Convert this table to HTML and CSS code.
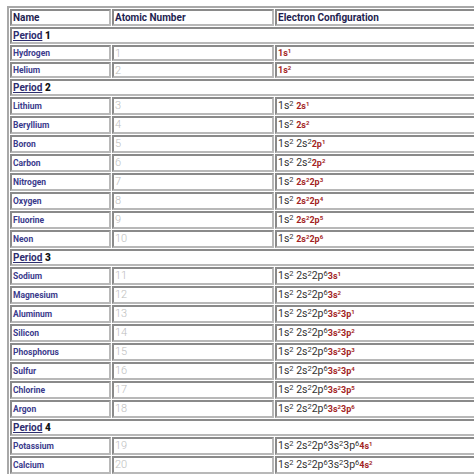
FILE: index.html
```html
<!DOCTYPE html>
<html lang="en">
<head>
<meta charset="utf-8">
<title>Electron Configuration</title>
<link rel="stylesheet" href="styles.css">
</head>
<body>
<table class="elements">
  <tr class="head">
    <th class="col-name">Name</th>
    <th class="col-num">Atomic Number</th>
    <th class="col-cfg">Electron Configuration</th>
  </tr>
  <tr class="period"><td colspan="3"><a href="#">Period</a> <b>1</b></td></tr>
  <tr class="small"><td class="name">Hydrogen</td><td class="num">1</td><td class="cfg"><span class="hl">1s<sup>1</sup></span></td></tr>
  <tr class="small"><td class="name">Helium</td><td class="num">2</td><td class="cfg"><span class="hl">1s<sup>2</sup></span></td></tr>
  <tr class="period"><td colspan="3"><a href="#">Period</a> <b>2</b></td></tr>
  <tr class="big"><td class="name">Lithium</td><td class="num">3</td><td class="cfg">1s<sup>2</sup> <span class="hl">2s<sup>1</sup></span></td></tr>
  <tr class="big"><td class="name">Beryllium</td><td class="num">4</td><td class="cfg">1s<sup>2</sup> <span class="hl">2s<sup>2</sup></span></td></tr>
  <tr class="big"><td class="name">Boron</td><td class="num">5</td><td class="cfg">1s<sup>2</sup> 2s<sup>2</sup><span class="hl">2p<sup>1</sup></span></td></tr>
  <tr class="big"><td class="name">Carbon</td><td class="num">6</td><td class="cfg">1s<sup>2</sup> 2s<sup>2</sup><span class="hl">2p<sup>2</sup></span></td></tr>
  <tr class="big"><td class="name">Nitrogen</td><td class="num">7</td><td class="cfg">1s<sup>2</sup> <span class="hl">2s<sup>2</sup>2p<sup>3</sup></span></td></tr>
  <tr class="big"><td class="name">Oxygen</td><td class="num">8</td><td class="cfg">1s<sup>2</sup> <span class="hl">2s<sup>2</sup>2p<sup>4</sup></span></td></tr>
  <tr class="big"><td class="name">Fluorine</td><td class="num">9</td><td class="cfg">1s<sup>2</sup> <span class="hl">2s<sup>2</sup>2p<sup>5</sup></span></td></tr>
  <tr class="big"><td class="name">Neon</td><td class="num">10</td><td class="cfg">1s<sup>2</sup> <span class="hl">2s<sup>2</sup>2p<sup>6</sup></span></td></tr>
  <tr class="period"><td colspan="3"><a href="#">Period</a> <b>3</b></td></tr>
  <tr class="big"><td class="name">Sodium</td><td class="num">11</td><td class="cfg">1s<sup>2</sup> 2s<sup>2</sup>2p<sup>6</sup><span class="hl">3s<sup>1</sup></span></td></tr>
  <tr class="big"><td class="name">Magnesium</td><td class="num">12</td><td class="cfg">1s<sup>2</sup> 2s<sup>2</sup>2p<sup>6</sup><span class="hl">3s<sup>2</sup></span></td></tr>
  <tr class="big"><td class="name">Aluminum</td><td class="num">13</td><td class="cfg">1s<sup>2</sup> 2s<sup>2</sup>2p<sup>6</sup><span class="hl">3s<sup>2</sup>3p<sup>1</sup></span></td></tr>
  <tr class="big"><td class="name">Silicon</td><td class="num">14</td><td class="cfg">1s<sup>2</sup> 2s<sup>2</sup>2p<sup>6</sup><span class="hl">3s<sup>2</sup>3p<sup>2</sup></span></td></tr>
  <tr class="big"><td class="name">Phosphorus</td><td class="num">15</td><td class="cfg">1s<sup>2</sup> 2s<sup>2</sup>2p<sup>6</sup><span class="hl">3s<sup>2</sup>3p<sup>3</sup></span></td></tr>
  <tr class="big"><td class="name">Sulfur</td><td class="num">16</td><td class="cfg">1s<sup>2</sup> 2s<sup>2</sup>2p<sup>6</sup><span class="hl">3s<sup>2</sup>3p<sup>4</sup></span></td></tr>
  <tr class="big"><td class="name">Chlorine</td><td class="num">17</td><td class="cfg">1s<sup>2</sup> 2s<sup>2</sup>2p<sup>6</sup><span class="hl">3s<sup>2</sup>3p<sup>5</sup></span></td></tr>
  <tr class="big"><td class="name">Argon</td><td class="num">18</td><td class="cfg">1s<sup>2</sup> 2s<sup>2</sup>2p<sup>6</sup><span class="hl">3s<sup>2</sup>3p<sup>6</sup></span></td></tr>
  <tr class="period"><td colspan="3"><a href="#">Period</a> <b>4</b></td></tr>
  <tr class="big"><td class="name">Potassium</td><td class="num">19</td><td class="cfg">1s<sup>2</sup> 2s<sup>2</sup>2p<sup>6</sup>3s<sup>2</sup>3p<sup>6</sup><span class="hl">4s<sup>1</sup></span></td></tr>
  <tr class="big"><td class="name">Calcium</td><td class="num">20</td><td class="cfg">1s<sup>2</sup> 2s<sup>2</sup>2p<sup>6</sup>3s<sup>2</sup>3p<sup>6</sup><span class="hl">4s<sup>2</sup></span></td></tr>
</table>
</body>
</html>
```
FILE: styles.css
```css
html, body {
  overflow: hidden;
}
body {
  margin: 6px 0 0 7px;
  background: #fff;
  font-family: Roboto, "Liberation Sans", sans-serif;
}
.elements {
  border-collapse: separate;
  border-spacing: 1px;
  border: 2px solid #a8a8a8;
  table-layout: fixed;
  width: 560px;
}
.elements th,
.elements td {
  border: 2px solid;
  border-color: #8a8a8a #b8b8b8 #b8b8b8 #8a8a8a;
  padding: 0 1px;
  text-align: left;
  vertical-align: middle;
  white-space: nowrap;
}
.col-name {
  width: 101px;
  box-sizing: border-box;
}
.col-num {
  width: 162px;
  box-sizing: border-box;
}
.head th {
  font-size: 10px;
  font-weight: 700;
  line-height: 13px;
  color: #1e1e50;
}
.period td {
  font-size: 10px;
  font-weight: 700;
  line-height: 13px;
}
.period a {
  color: #2d2d6e;
  text-decoration: underline;
}
.period b {
  color: #111;
}
.small td {
  line-height: 11px;
}
.big td {
  line-height: 14px;
}
.name {
  font-size: 8.5px;
  font-weight: 700;
  color: #3b3b8c;
}
.num {
  font-size: 11px;
  font-weight: 300;
  color: #bdbdbd;
}
.cfg {
  font-size: 10.5px;
  color: #333;
}
.cfg sup {
  font-size: 7.5px;
  line-height: 0;
  vertical-align: 3.5px;
}
.hl {
  color: #a31f24;
  font-weight: 700;
  font-size: 9px;
}
.hl sup {
  font-size: 6px;
  vertical-align: 3px;
}
```
